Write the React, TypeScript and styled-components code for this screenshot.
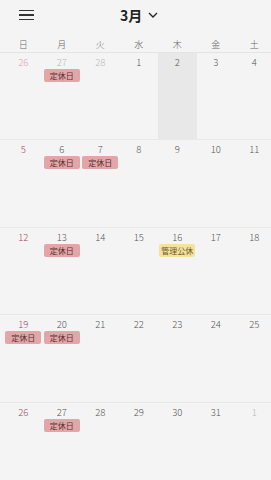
import styled, { createGlobalStyle } from 'styled-components';

const GlobalStyle = createGlobalStyle`
  html, body {
    margin: 0;
    padding: 0;
    background: #f4f4f4;
    overflow: hidden;
  }
  body {
    font-family: "Noto Sans CJK JP", "Noto Sans", sans-serif;
    color: #444;
  }
`;

const Page = styled.div`
  width: 271px;
  height: 480px;
  overflow: hidden;
  background: #f4f4f4;
`;

const TopBar = styled.header`
  height: 33px;
  display: flex;
  align-items: center;
  position: relative;
`;

const MenuButton = styled.div`
  margin-left: 19px;
  margin-top: -3px;
  width: 15px;
  display: flex;
  flex-direction: column;
  gap: 3.3px;

  span {
    display: block;
    height: 1.3px;
    background: #333;
  }
`;

const MonthTitle = styled.div`
  position: absolute;
  left: 120px;
  top: 5px;
  display: flex;
  align-items: center;
  gap: 6px;
  font-size: 14px;
  font-weight: 700;
  color: #222;
`;

const Columns = styled.div`
  display: grid;
  grid-template-columns: repeat(7, 38.5px);
  padding-left: 4px;
`;

const WeekHeader = styled(Columns)`
  height: 19px;
  border-bottom: 1px solid #e4e4e4;
`;

const WeekLabel = styled.div`
  font-size: 9px;
  line-height: 19px;
  text-align: center;
  color: #666;
  font-weight: 300;
  padding-top: 2px;
`;

const WeekRow = styled(Columns)`
  height: 86px;
  border-bottom: 1px solid #e8e8e8;

  &:nth-of-type(odd) {
    height: 87px;
  }
`;

const Cell = styled.div<{ $today?: boolean }>`
  display: flex;
  flex-direction: column;
  align-items: center;
  background: ${({ $today }) => ($today ? '#e8e8e8' : 'transparent')};
`;

const DayNum = styled.div<{ $sun?: boolean; $muted?: boolean }>`
  font-size: 9.5px;
  font-weight: 300;
  line-height: 12px;
  padding-top: 3px;
  margin-bottom: 1px;
  color: ${({ $sun, $muted }) =>
    $sun ? ($muted ? '#d6a6b0' : '#a8445e') : $muted ? '#b8b8b8' : '#555'};
`;

const Badge = styled.div<{ $kind: 'closed' | 'staff' }>`
  width: 36px;
  height: 13px;
  border-radius: 2px;
  font-size: 8px;
  line-height: 13px;
  text-align: center;
  background: ${({ $kind }) => ($kind === 'closed' ? '#e2a6a8' : '#f6e29c')};
  color: ${({ $kind }) => ($kind === 'closed' ? '#5a2f31' : '#6b5a2c')};
`;

type Day = { n: number; muted?: boolean; today?: boolean; badge?: 'closed' | 'staff' };

const weeks: Day[][] = [
  [
    { n: 26, muted: true },
    { n: 27, muted: true, badge: 'closed' },
    { n: 28, muted: true },
    { n: 1 },
    { n: 2, today: true },
    { n: 3 },
    { n: 4 },
  ],
  [{ n: 5 }, { n: 6, badge: 'closed' }, { n: 7, badge: 'closed' }, { n: 8 }, { n: 9 }, { n: 10 }, { n: 11 }],
  [{ n: 12 }, { n: 13, badge: 'closed' }, { n: 14 }, { n: 15 }, { n: 16, badge: 'staff' }, { n: 17 }, { n: 18 }],
  [{ n: 19, badge: 'closed' }, { n: 20, badge: 'closed' }, { n: 21 }, { n: 22 }, { n: 23 }, { n: 24 }, { n: 25 }],
  [{ n: 26 }, { n: 27, badge: 'closed' }, { n: 28 }, { n: 29 }, { n: 30 }, { n: 31 }, { n: 1, muted: true }],
];

const labels = ['日', '月', '火', '水', '木', '金', '土'];

const badgeText = { closed: '定休日', staff: '管理公休' };

function App() {
  return (
    <Page>
      <GlobalStyle />
      <TopBar>
        <MenuButton>
          <span />
          <span />
          <span />
        </MenuButton>
        <MonthTitle>
          3月
          <svg width="10" height="6" viewBox="0 0 10 6" fill="none">
            <path d="M1 1l4 4 4-4" stroke="#222" strokeWidth="1.3" />
          </svg>
        </MonthTitle>
      </TopBar>

      <WeekHeader>
        {labels.map((l) => (
          <WeekLabel key={l}>{l}</WeekLabel>
        ))}
      </WeekHeader>

      {weeks.map((week, i) => (
        <WeekRow key={i}>
          {week.map((d, j) => (
            <Cell key={j} $today={d.today}>
              <DayNum $sun={j === 0} $muted={d.muted}>
                {d.n}
              </DayNum>
              {d.badge && <Badge $kind={d.badge}>{badgeText[d.badge]}</Badge>}
            </Cell>
          ))}
        </WeekRow>
      ))}
    </Page>
  );
}

export default App;
